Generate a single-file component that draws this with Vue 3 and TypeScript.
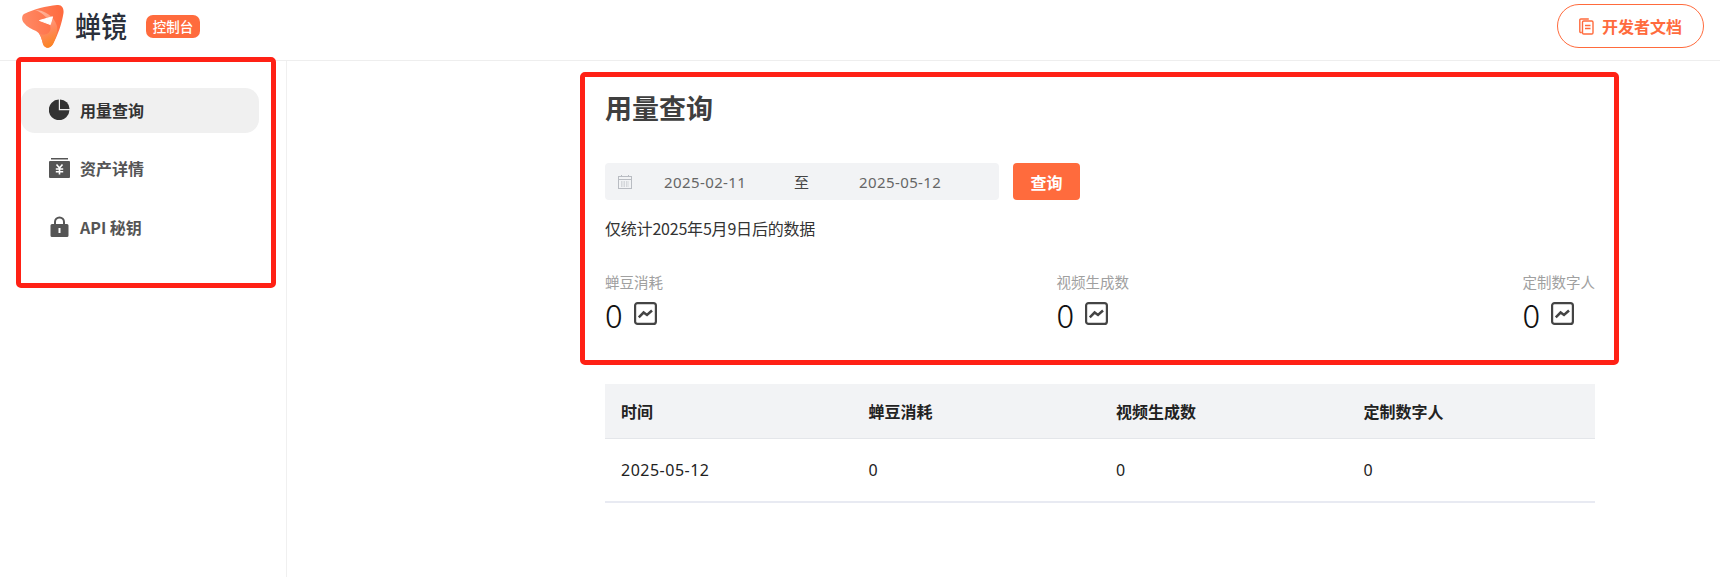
<script setup lang="ts">
interface Stat { label: string; value: number }
const navItems = [
  { key: 'usage', label: '用量查询', active: true },
  { key: 'asset', label: '资产详情', active: false },
  { key: 'api', label: 'API 秘钥', active: false },
]
const stats: Stat[] = [
  { label: '蝉豆消耗', value: 0 },
  { label: '视频生成数', value: 0 },
  { label: '定制数字人', value: 0 },
]
const columns = ['时间', '蝉豆消耗', '视频生成数', '定制数字人']
const row = ['2025-05-12', '0', '0', '0']
</script>

<template>
  <div class="page">
    <header class="topbar">
      <div class="brand">
        <svg class="logo" viewBox="0 0 42 43" width="42" height="43">
          <defs>
            <linearGradient id="lg1" x1="0" y1="0.4" x2="1" y2="0.3">
              <stop offset="0" stop-color="#ff8a66" />
              <stop offset="1" stop-color="#ff6a3e" />
            </linearGradient>
            <linearGradient id="lg2" x1="0.3" y1="0" x2="0.6" y2="1">
              <stop offset="0" stop-color="#ffb49c" />
              <stop offset="0.55" stop-color="#ff8a62" />
              <stop offset="1" stop-color="#fb8420" />
            </linearGradient>
          </defs>
          <path fill="url(#lg1)" d="M2 9C12 4 24 1 35 0c5-.3 7 3 6.500 8C40 18 36 30 31 39c-3 5-8 5-10 0-1.500-6-3-11-7-13C9.500 24 5 22 2 18-.5 15-.5 11 2 9Z" />
          <path fill="url(#lg2)" d="M13 5c9 0 19 6 22 16 1 6-1.500 13-4 18-3 5-8 5-10 0-1-4-2-7.500-3.500-10 5 1.500 10 .5 11-5C29 16 22 8 13 5Z" />
          <path fill="#fff" stroke="#fff" stroke-linejoin="round" d="M17.500 15.500 30.500 11.800 28.300 19.500Z" />
        </svg>
        <span class="wordmark">蝉镜</span>
        <span class="badge">控制台</span>
      </div>
      <button class="doc-btn" type="button">
        <svg width="15" height="17" viewBox="0 0 15 17" fill="none" stroke="#ff6b3d" stroke-width="1.400">
          <path d="M2.800 14.500H1.800a1 1 0 0 1-1-1V2a1 1 0 0 1 1-1h8" />
          <rect x="3.500" y="3" width="10.500" height="13" rx="1.200" />
          <path d="M6 7.500h5.500M6 10.500h5.500" />
        </svg>
        开发者文档
      </button>
    </header>

    <div class="body">
      <aside class="sidebar">
        <nav class="nav">
          <a v-for="item in navItems" :key="item.key" class="nav-item" :class="{ active: item.active }">
            <svg v-if="item.key === 'usage'" viewBox="0 0 21 21" width="21" height="21" fill="#333">
              <path d="M9.800.6v10.600h10.600A10.300 10.300 0 1 1 9.800.6Z" />
              <path d="M11 .4a9.800 9.800 0 0 1 9.600 9.600H11Z" />
            </svg>
            <svg v-else-if="item.key === 'asset'" viewBox="0 0 21 21" width="21" height="21" fill="#555">
              <rect x="2" y="0" width="17" height="1.500" />
              <path d="M1 3h19a1 1 0 0 1 1 1v15a1 1 0 0 1-1 1H1a1 1 0 0 1-1-1V4a1 1 0 0 1 1-1Z" />
              <path d="M7.500 6.500l3 3.500 3-3.500M6.800 11h7.400M6.800 13.800h7.400M10.500 10v6.500" fill="none" stroke="#fff" stroke-width="1.600" />
            </svg>
            <svg v-else viewBox="0 0 21 21" width="21" height="21" fill="#555">
              <path fill-rule="evenodd" d="M5 8V6a5.500 5.500 0 0 1 11 0v2h2a1.500 1.500 0 0 1 1.500 1.500v10A1.500 1.500 0 0 1 18 21H3a1.500 1.500 0 0 1-1.500-1.500v-10A1.500 1.500 0 0 1 3 8Zm2 0h7V6a3.500 3.500 0 0 0-7 0Zm2.500 4v5h2v-5Z" />
            </svg>
            <span>{{ item.label }}</span>
          </a>
        </nav>
      </aside>

      <main class="content">
        <h1 class="title">用量查询</h1>
        <div class="filter">
          <div class="range">
            <svg class="cal" width="14" height="14" viewBox="0 0 14 14" fill="none" stroke="#b9bcc2">
              <rect x="0.500" y="1.500" width="13" height="12" />
              <path d="M0.500 4.500h13" />
              <path d="M3 7h8M3 9h8M3 11h8" stroke-dasharray="1.500 1" />
              <path d="M3.500 0v2M10.500 0v2" />
            </svg>
            <span class="date first">2025-02-11</span>
            <span class="to">至</span>
            <span class="date">2025-05-12</span>
          </div>
          <button class="query" type="button">查询</button>
        </div>
        <p class="note">仅统计2025年5月9日后的数据</p>

        <div class="stats">
          <div v-for="s in stats" :key="s.label" class="stat">
            <div class="stat-label">{{ s.label }}</div>
            <div class="stat-value">
              <span class="num">{{ s.value }}</span>
              <svg width="23" height="23" viewBox="0 0 23 23" fill="none" stroke="#444">
                <rect x="1.100" y="1.100" width="20.800" height="20.800" rx="2.500" stroke-width="2.200" />
                <path d="M4.800 15.300 9.600 10.500l3.400 2.500 5-4.500" stroke-width="2.500" />
              </svg>
            </div>
          </div>
        </div>

        <table class="table">
          <thead>
            <tr><th v-for="c in columns" :key="c">{{ c }}</th></tr>
          </thead>
          <tbody>
            <tr><td v-for="(v, i) in row" :key="i">{{ v }}</td></tr>
          </tbody>
        </table>
      </main>
    </div>

    <div class="mark mark-nav"></div>
    <div class="mark mark-main"></div>
  </div>
</template>

<style scoped>
.page {
  position: relative;
  width: 1720px;
  height: 577px;
  overflow: hidden;
  background: #fff;
  font-family: "Noto Sans CJK SC", "Noto Sans", sans-serif;
  color: #333;
}
.topbar {
  height: 60px;
  box-sizing: content-box;
  border-bottom: 1px solid #eeeeee;
  display: flex;
  align-items: center;
  justify-content: space-between;
  padding: 0 16px 0 22px;
}
.brand {
  display: flex;
  align-items: center;
  margin-top: -8px;
}
.logo { display: block; }
.wordmark {
  margin-left: 11px;
  font-size: 26px;
  font-weight: 500;
  line-height: 30px;
  color: #2b303b;
  transform: scaleY(1.12);
}
.badge {
  margin-left: 19px;
  width: 54px;
  height: 23px;
  line-height: 23px;
  text-align: center;
  border-radius: 7px;
  background: #ff6b3d;
  color: #fff;
  font-size: 13.500px;
  font-weight: 500;
}
.doc-btn {
  width: 147px;
  height: 44px;
  margin-top: -8px;
  border: 1px solid #ff6b3d;
  border-radius: 22px;
  background: #fff;
  color: #ff6b3d;
  font-family: inherit;
  font-size: 16px;
  font-weight: 700;
  display: flex;
  align-items: center;
  justify-content: center;
  gap: 8px;
  padding: 0;
}
.body {
  display: flex;
  height: 516px;
}
.sidebar {
  flex: none;
  width: 238px;
  border-right: 1px solid #f0f0f0;
  padding: 27px 27px 0 21px;
  box-sizing: content-box;
}
.nav {
  display: flex;
  flex-direction: column;
  gap: 13.500px;
}
.nav-item {
  height: 45px;
  box-sizing: border-box;
  padding-bottom: 2px;
  display: flex;
  align-items: center;
  gap: 10px;
  padding-left: 28px;
  border-radius: 14px;
  font-size: 16px;
  font-weight: 700;
  color: #555;
}
.nav-item.active {
  background: #f0f0f0;
  color: #333;
}
.content {
  width: 990px;
  margin-left: 318px;
}
.title {
  margin: 27px 0 0;
  font-size: 27px;
  font-weight: 700;
  line-height: 40px;
  color: #3f3f3f;
}
.filter {
  display: flex;
  gap: 14px;
  margin-top: 35px;
}
.range {
  width: 394px;
  height: 37px;
  border-radius: 4px;
  background: #f2f3f5;
  display: flex;
  align-items: center;
  font-family: "Noto Sans", "Noto Sans CJK SC", sans-serif;
  font-size: 15px;
  letter-spacing: 0.4px;
  color: #666;
  white-space: nowrap;
}
.cal {
  margin-left: 13px;
  flex: none;
}
.date { width: 80px; flex: none; }
.date.first { margin-left: 32px; }
.to { margin: 0 50px; width: 15px; color: #444; font-family: "Noto Sans CJK SC", sans-serif; font-size: 15px; }
.query {
  width: 67px;
  height: 37px;
  border: 0;
  border-radius: 4px;
  background: #ff6b3d;
  color: #fff;
  font-family: inherit;
  font-size: 16px;
  font-weight: 700;
  padding: 0;
}
.note {
  margin: 16px 0 0;
  font-size: 16px;
  letter-spacing: -0.2px;
  line-height: 24px;
  color: #333;
}
.stats {
  display: flex;
  justify-content: space-between;
  margin-top: 31px;
}
.stat-label {
  font-size: 14.500px;
  line-height: 22px;
  color: #a0a0a0;
}
.stat-value {
  display: flex;
  align-items: flex-start;
  gap: 11px;
  height: 44px;
}
.num {
  font-size: 33px;
  font-weight: 300;
  line-height: 42px;
  color: #111;
}
.stat-value svg { margin-top: 9px; }
.table {
  width: 990px;
  margin-top: 47px;
  border-collapse: collapse;
  table-layout: fixed;
  font-size: 16px;
  color: #222;
}
.table th {
  height: 54px;
  padding: 0 16px;
  text-align: left;
  font-weight: 700;
  background: #f2f3f5;
  border-bottom: 1px solid #e4e6ea;
}
.table td {
  height: 62px;
  padding: 0 16px;
  font-family: "Noto Sans", "Noto Sans CJK SC", sans-serif;
  letter-spacing: 0.5px;
  border-bottom: 2px solid #e8eaf2;
}
.mark {
  position: absolute;
  box-sizing: border-box;
  border: 5px solid #ff2115;
  border-radius: 5px;
  pointer-events: none;
}
.mark-nav { left: 16px; top: 57px; width: 260px; height: 231px; }
.mark-main { left: 580px; top: 72px; width: 1039px; height: 293px; }
</style>
